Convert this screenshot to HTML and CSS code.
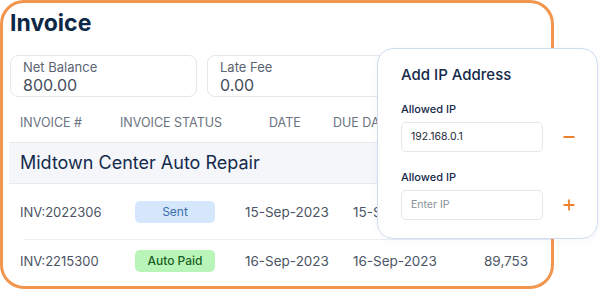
FILE: index.html
```html
<!DOCTYPE html>
<html lang="en">
<head>
  <meta charset="UTF-8">
  <meta name="viewport" content="width=device-width, initial-scale=1.0">
  <title>Invoice • Add IP Address</title>
  <link rel="stylesheet" href="styles.css">
</head>
<body>
  <div class="stage">
    <!-- Invoice card -->
    <div class="invoice-card">
      <h1>Invoice</h1>
      <div class="stats">
        <div class="stat-box"><div class="stat-name">Net Balance</div><div class="stat-value">800.00</div></div>
        <div class="stat-box"><div class="stat-name">Late Fee</div><div class="stat-value">0.00</div></div>
      </div>
      <div class="table">
        <div class="table-head">
          <div>INVOICE #</div>
          <div>INVOICE STATUS</div>
          <div>DATE</div>
          <div>DUE DATE</div>
          <div>AMOUNT</div>
        </div>
        <div class="group-row">Midtown Center Auto Repair</div>
        <div class="row row-first">
          <div>INV:2022306</div>
          <div><span class="badge badge-sent">Sent</span></div>
          <div class="num">15-Sep-2023</div>
          <div class="num">15-Sep-2023</div>
          <div class="num"></div>
        </div>
        <div class="row row-split">
          <div>INV:2215300</div>
          <div><span class="badge badge-paid">Auto Paid</span></div>
          <div class="num">16-Sep-2023</div>
          <div class="num">16-Sep-2023</div>
          <div class="num">89,753</div>
        </div>
      </div>
    </div>

    <!-- IP popup -->
    <div class="ip-popup">
      <h2>Add IP Address</h2>
      <div class="field">
        <label>Allowed IP</label>
        <div class="field-row">
          <div class="ip-input">192.168.0.1</div>
          <svg class="ip-icon" width="12" height="12" viewBox="0 0 12 12"><path d="M0.5 6h11" stroke="#e9812f" stroke-width="2"/></svg>
        </div>
      </div>
      <div class="field">
        <label>Allowed IP</label>
        <div class="field-row">
          <div class="ip-input placeholder">Enter IP</div>
          <svg class="ip-icon" width="12" height="12" viewBox="0 0 12 12"><path d="M6 0.5v11M0.5 6h11" stroke="#e9812f" stroke-width="1.8"/></svg>
        </div>
      </div>
    </div>
  </div>
</body>
</html>
```

FILE: styles.css
```css
body {
  margin: 0;
  font-family: 'Inter', 'Noto Sans', sans-serif;
  background: #fff;
  color: #4b5565;
}
.stage {
  position: relative;
  width: 600px;
  height: 290px;
}
.invoice-card {
  box-sizing: border-box;
  width: 554px;
  height: 289px;
  border: 3px solid #f2964f;
  border-radius: 24px;
  padding: 7px 0 0 7px;
  overflow: hidden;
  background: #fff;
}
h1 {
  margin: 0;
  font-size: 23px;
  line-height: 27px;
  font-weight: 700;
  color: #0d2746;
}
.stats {
  display: flex;
  gap: 10px;
  margin: 18px 0 6px 0;
}
.stat-box {
  flex: 0 0 187px;
  box-sizing: border-box;
  height: 42px;
  padding: 3px 12px 0 12px;
  border: 1px solid #e4e7eb;
  border-radius: 8px;
}
.stat-name {
  font-size: 13px;
  line-height: 16px;
  color: #5b6472;
}
.stat-value {
  font-size: 16px;
  line-height: 20px;
  color: #454d5c;
}
.table {
  margin-left: -1px;
}
.table-head {
  display: grid;
  grid-template-columns: 100px 149px 64px 140px 1fr;
  padding: 12px 0 11px 11px;
  font-size: 12.5px;
  line-height: 16px;
  color: #6b7280;
  border-bottom: 1px solid #e6e9ee;
}
.group-row {
  background: #f4f6f9;
  height: 40px;
  line-height: 40px;
  padding-left: 11px;
  font-size: 18px;
  color: #142b4d;
  border-bottom: 1px solid #e6e9ee;
}
.row {
  display: grid;
  grid-template-columns: 100px 125px 108px 131px 1fr;
  align-items: center;
  padding: 10px 0 10px 11px;
  font-size: 13px;
  line-height: 22px;
  color: #4b5565;
}
.row .num {
  font-size: 13.5px;
}
.row-first {
  padding-top: 16px;
  padding-bottom: 16px;
}
.row-split {
  background: linear-gradient(#eceef2, #eceef2) no-repeat 15px 0 / 100% 1px;
}
.badge {
  display: inline-block;
  width: 80px;
  height: 22px;
  margin-left: 15px;
  border-radius: 5px;
  text-align: center;
  font-size: 12px;
  line-height: 22px;
}
.badge-sent {
  background: #d4e7fc;
  color: #3b6ea9;
}
.badge-paid {
  background: #b9f5b9;
  color: #1a5e23;
  font-weight: 500;
}
.ip-popup {
  position: absolute;
  left: 377px;
  top: 48px;
  width: 221px;
  box-sizing: border-box;
  padding: 16px 0 18px 23px;
  background: #fff;
  border: 1px solid #cfdcf2;
  border-radius: 16px;
  box-shadow: 0 2px 8px rgba(30, 60, 120, 0.04);
}
.ip-popup h2 {
  margin: 0 0 17px 0;
  font-size: 15px;
  line-height: 20px;
  font-weight: 500;
  color: #14294a;
}
.field + .field {
  margin-top: 18px;
}
.field label {
  display: block;
  font-size: 11px;
  line-height: 14px;
  font-weight: 500;
  color: #15294a;
  margin-bottom: 6px;
}
.field-row {
  display: flex;
  align-items: center;
  gap: 20px;
}
.ip-input {
  box-sizing: border-box;
  width: 142px;
  height: 30px;
  padding-left: 9px;
  border: 1px solid #e3e6eb;
  border-radius: 5px;
  font-size: 10.5px;
  line-height: 28px;
  color: #1f2937;
}
.ip-input.placeholder {
  color: #8a9099;
}
.ip-icon {
  flex: none;
}
```
